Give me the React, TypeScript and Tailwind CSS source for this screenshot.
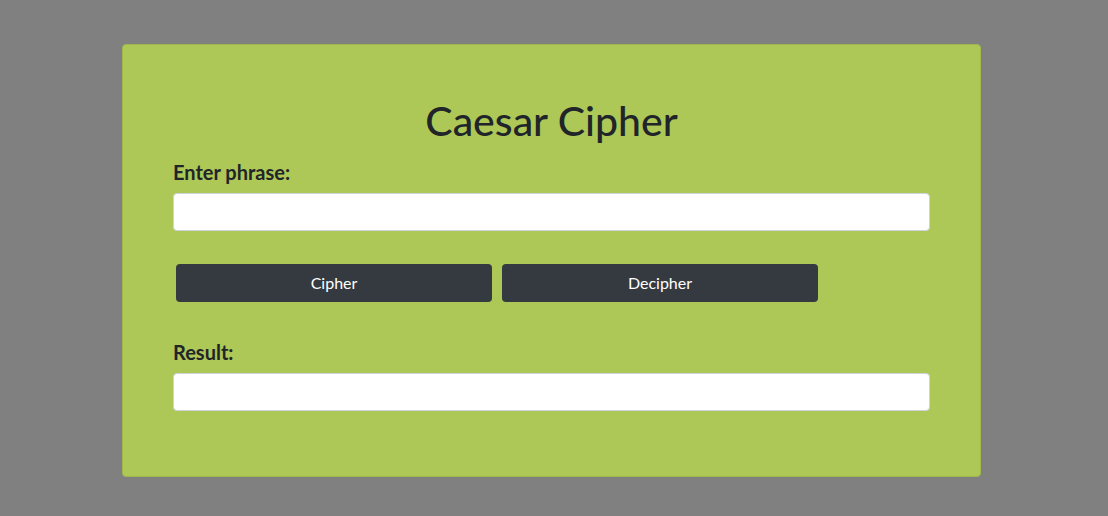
import { useState } from "react";

const shift = (text: string, n: number): string =>
  text.replace(/[a-z]/gi, (c) => {
    const base = c <= "Z" ? 65 : 97;
    return String.fromCharCode(((c.charCodeAt(0) - base + n + 26) % 26) + base);
  });

const App = (): JSX.Element => {
  const [phrase, setPhrase] = useState("");
  const [result, setResult] = useState("");

  return (
    <div className="min-h-[516px] bg-[#808080] pt-[44px] pb-[38px] font-['Lato',sans-serif] text-[#212529]">
      <div className="ml-[122px] w-[859px] h-[433px] rounded-[4px] border border-[#9fb84c] bg-[#adc856] px-[50px] pt-[52px]">
        <h1 className="text-center text-[41px] font-medium leading-[48px]">Caesar Cipher</h1>

        <label className="mt-[15px] block text-[20px] font-bold leading-[24px]">Enter phrase:</label>
        <input
          value={phrase}
          onChange={(e) => setPhrase(e.target.value)}
          className="mt-[9px] block h-[38px] w-full rounded-[4px] border border-[#ced4da] bg-white px-3 outline-none"
        />

        {/* Actions */}
        <div className="mt-[33px] flex gap-[10px] pl-[3px]">
          <button
            onClick={() => setResult(shift(phrase, 3))}
            className="h-[38px] w-[316px] rounded-[4px] bg-[#343a40] text-[16px] text-white"
          >
            Cipher
          </button>
          <button
            onClick={() => setResult(shift(phrase, -3))}
            className="h-[38px] w-[316px] rounded-[4px] bg-[#343a40] text-[16px] text-white"
          >
            Decipher
          </button>
        </div>

        <label className="mt-[38px] block text-[20px] font-bold leading-[24px]">Result:</label>
        <input
          readOnly
          value={result}
          className="mt-[9px] block h-[38px] w-full rounded-[4px] border border-[#ced4da] bg-white px-3 outline-none"
        />
      </div>
    </div>
  );
};

export default App;
